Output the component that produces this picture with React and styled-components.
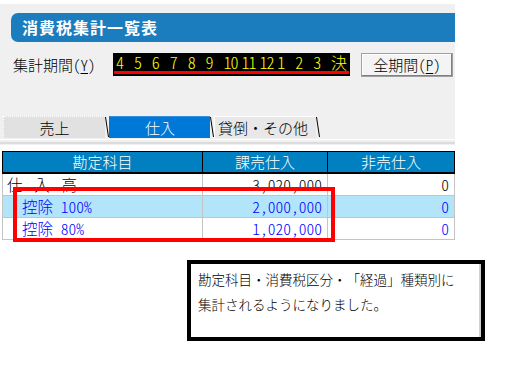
import React from 'react';
import styled, { createGlobalStyle } from 'styled-components';

const GlobalStyle = createGlobalStyle`
  html, body {
    margin: 0;
    padding: 0;
    background: #ffffff;
  }
  body {
    font-family: "Noto Sans CJK JP", "Noto Sans", sans-serif;
    font-feature-settings: "hwid" 1;
    font-weight: 300;
  }
`;

const Page = styled.div`
  position: relative;
  width: 520px;
  height: 374px;
  padding-top: 4px;
  box-sizing: border-box;
`;

const Panel = styled.div`
  width: 455px;
  height: 141px;
  box-sizing: border-box;
  padding-top: 9px;
  background: #f0f0f0;
  display: flex;
  flex-direction: column;
`;

const TitleBar = styled.div`
  margin-left: 11px;
  height: 29px;
  background: #1b7dbd;
  border-radius: 7px 0 0 7px;
  color: #ffffff;
  font-size: 16px;
  font-weight: 700;
  line-height: 29px;
  padding-left: 11px;
  letter-spacing: 1px;
`;

const PeriodRow = styled.div`
  margin-top: 11px;
  height: 24px;
  padding-left: 13px;
  display: flex;
  align-items: center;
`;

const Label = styled.span`
  font-size: 15px;
  line-height: 24px;
  color: #000;
  width: 100px;
  u {
    text-decoration: underline;
    text-underline-offset: 2px;
  }
`;

const MonthBox = styled.div`
  width: 237px;
  height: 23px;
  margin-top: -1px;
  background: #000;
  display: flex;
  flex-direction: column;
  box-sizing: border-box;
  padding: 0 1px;
`;

const MonthCells = styled.div`
  display: flex;
  height: 18px;
  padding-left: 2px;
`;

const MonthCell = styled.span`
  width: 18px;
  color: #ffff00;
  font-size: 16px;
  line-height: 19px;
  letter-spacing: ${p => (p.$tight ? '-1px' : '0')};
  white-space: nowrap;
`;

const RedBar = styled.div`
  height: 3px;
  background: #ff0000;
`;

const Button = styled.button`
  margin-left: 11px;
  width: 92px;
  height: 24px;
  padding: 0;
  background: #f4f4f4;
  border: 1px solid #a0a0a0;
  box-shadow: inset -1px -1px 0 #808080, inset 1px 1px 0 #ffffff;
  font-family: "Noto Sans CJK JP", sans-serif;
  font-feature-settings: "hwid" 1;
  font-weight: 300;
  font-size: 15px;
  line-height: 22px;
  color: #000;
  u {
    text-underline-offset: 2px;
  }
`;

const TabStrip = styled.div`
  margin-top: 39px;
  height: 22px;
  padding-left: 3px;
  display: flex;
  align-items: stretch;
`;

const Tab = styled.div`
  width: ${p => p.$w}px;
  box-sizing: border-box;
  background: ${p => (p.$active ? '#0078d7' : p.$plain ? '#e8e8e8' : '#e1e1e1')};
  color: ${p => (p.$active ? '#ffffff' : '#000000')};
  border-top: 1px ${p => (p.$focus ? 'dotted' : 'solid')} ${p => (p.$active ? '#3a8ee0' : '#ffffff')};
  border-left: 1px ${p => (p.$focus ? 'dotted' : 'solid')} ${p => (p.$active ? '#0078d7' : '#ffffff')};
  font-size: 15px;
  line-height: 21px;
  text-align: ${p => (p.$plain ? 'left' : 'center')};
  padding-left: ${p => (p.$plain ? 3 : 0)}px;
  white-space: nowrap;
`;

const Slash = () => (
  <svg width="4" height="22" viewBox="0 0 4 22" style={{ display: 'block' }}>
    <path d="M0.5 1 L3.5 21" stroke="#000" strokeWidth="1" fill="none" />
  </svg>
);

const TabRule = styled.div`
  margin-top: 1px;
  height: 2px;
  border-top: 1px solid #ffffff;
  border-bottom: 2px solid #dcdcdc;
`;

const Table = styled.div`
  margin-top: 6px;
  margin-left: 2px;
  width: 453px;
  display: grid;
  grid-template-columns: 201px 125px 127px;
`;

const HeadCell = styled.div`
  height: 23px;
  box-sizing: border-box;
  background: #0080c0;
  color: #ffffff;
  border-top: 1px solid #000;
  border-bottom: 2px solid #000;
  border-left: ${p => (p.$first ? '1px solid #000' : '0')};
  border-right: 1px solid #000;
  font-size: 15px;
  line-height: 20px;
  text-align: center;
`;

const Cell = styled.div`
  height: 22px;
  box-sizing: border-box;
  background: ${p => (p.$hl ? '#b3e5fa' : '#ffffff')};
  color: ${p => (p.$blue ? '#0000ff' : '#000000')};
  border-bottom: 1px solid #c4c4c4;
  border-left: ${p => (p.$first ? '1px solid #c4c4c4' : '0')};
  border-right: 1px solid #c4c4c4;
  font-size: 15.5px;
  line-height: 21px;
  text-align: ${p => (p.$num ? 'right' : 'left')};
  padding: ${p => (p.$num ? '0 5px 0 0' : `0 0 0 ${p.$indent}px`)};
  letter-spacing: ${p => (p.$spaced ? '2px' : '0')};
  white-space: nowrap;
`;

const Highlight = styled.div`
  position: absolute;
  left: 13px;
  top: 187px;
  width: 322px;
  height: 55px;
  box-sizing: border-box;
  border: 4px solid #ff0000;
  pointer-events: none;
`;

const Note = styled.div`
  margin-top: 20px;
  margin-left: 187px;
  width: 298px;
  height: 81px;
  box-sizing: border-box;
  border: 4px solid #000;
  box-shadow: inset -2px 0 0 #d0d0d0;
  background: #fff;
  padding: 3px 0 0 7px;
  font-size: 13.5px;
  line-height: 25px;
  color: #000;
`;

const months = ['4', '5', '6', '7', '8', '9', '10', '11', '12', '1', '2', '3', '決'];

const rows = [
  { name: '仕　入　高', a: '3,020,000', b: '0', indent: 4, spaced: true },
  { name: '控除 100%', a: '2,000,000', b: '0', indent: 19, blue: true, hl: true },
  { name: '控除 80%', a: '1,020,000', b: '0', indent: 19, blue: true },
];

export default function App() {
  return (
    <>
      <GlobalStyle />
      <Page>
        <Panel>
          <TitleBar>消費税集計一覧表</TitleBar>
          <PeriodRow>
            <Label>
              集計期間(<u>Y</u>)
            </Label>
            <MonthBox>
              <MonthCells>
                {months.map(m => (
                  <MonthCell key={m} $tight={m.length > 1}>
                    {m}
                  </MonthCell>
                ))}
              </MonthCells>
              <RedBar />
            </MonthBox>
            <Button>
              全期間(<u>P</u>)
            </Button>
          </PeriodRow>
          <TabStrip>
            <Tab $w={102} $focus>
              売上
            </Tab>
            <Slash />
            <Tab $w={101} $active>
              仕入
            </Tab>
            <Slash />
            <Tab $w={102} $plain>
              貸倒・その他
            </Tab>
            <Slash />
          </TabStrip>
          <TabRule />
        </Panel>
        <Table>
          <HeadCell $first>勘定科目</HeadCell>
          <HeadCell>課売仕入</HeadCell>
          <HeadCell>非売仕入</HeadCell>
          {rows.map(r => (
            <React.Fragment key={r.name}>
              <Cell $first $hl={r.hl} $blue={r.blue} $indent={r.indent} $spaced={r.spaced}>
                {r.name}
              </Cell>
              <Cell $num $hl={r.hl} $blue={r.blue}>
                {r.a}
              </Cell>
              <Cell $num $hl={r.hl} $blue={r.blue}>
                {r.b}
              </Cell>
            </React.Fragment>
          ))}
        </Table>
        <Highlight />
        <Note>
          勘定科目・消費税区分・「経過」種類別に
          <br />
          集計されるようになりました。
        </Note>
      </Page>
    </>
  );
}
